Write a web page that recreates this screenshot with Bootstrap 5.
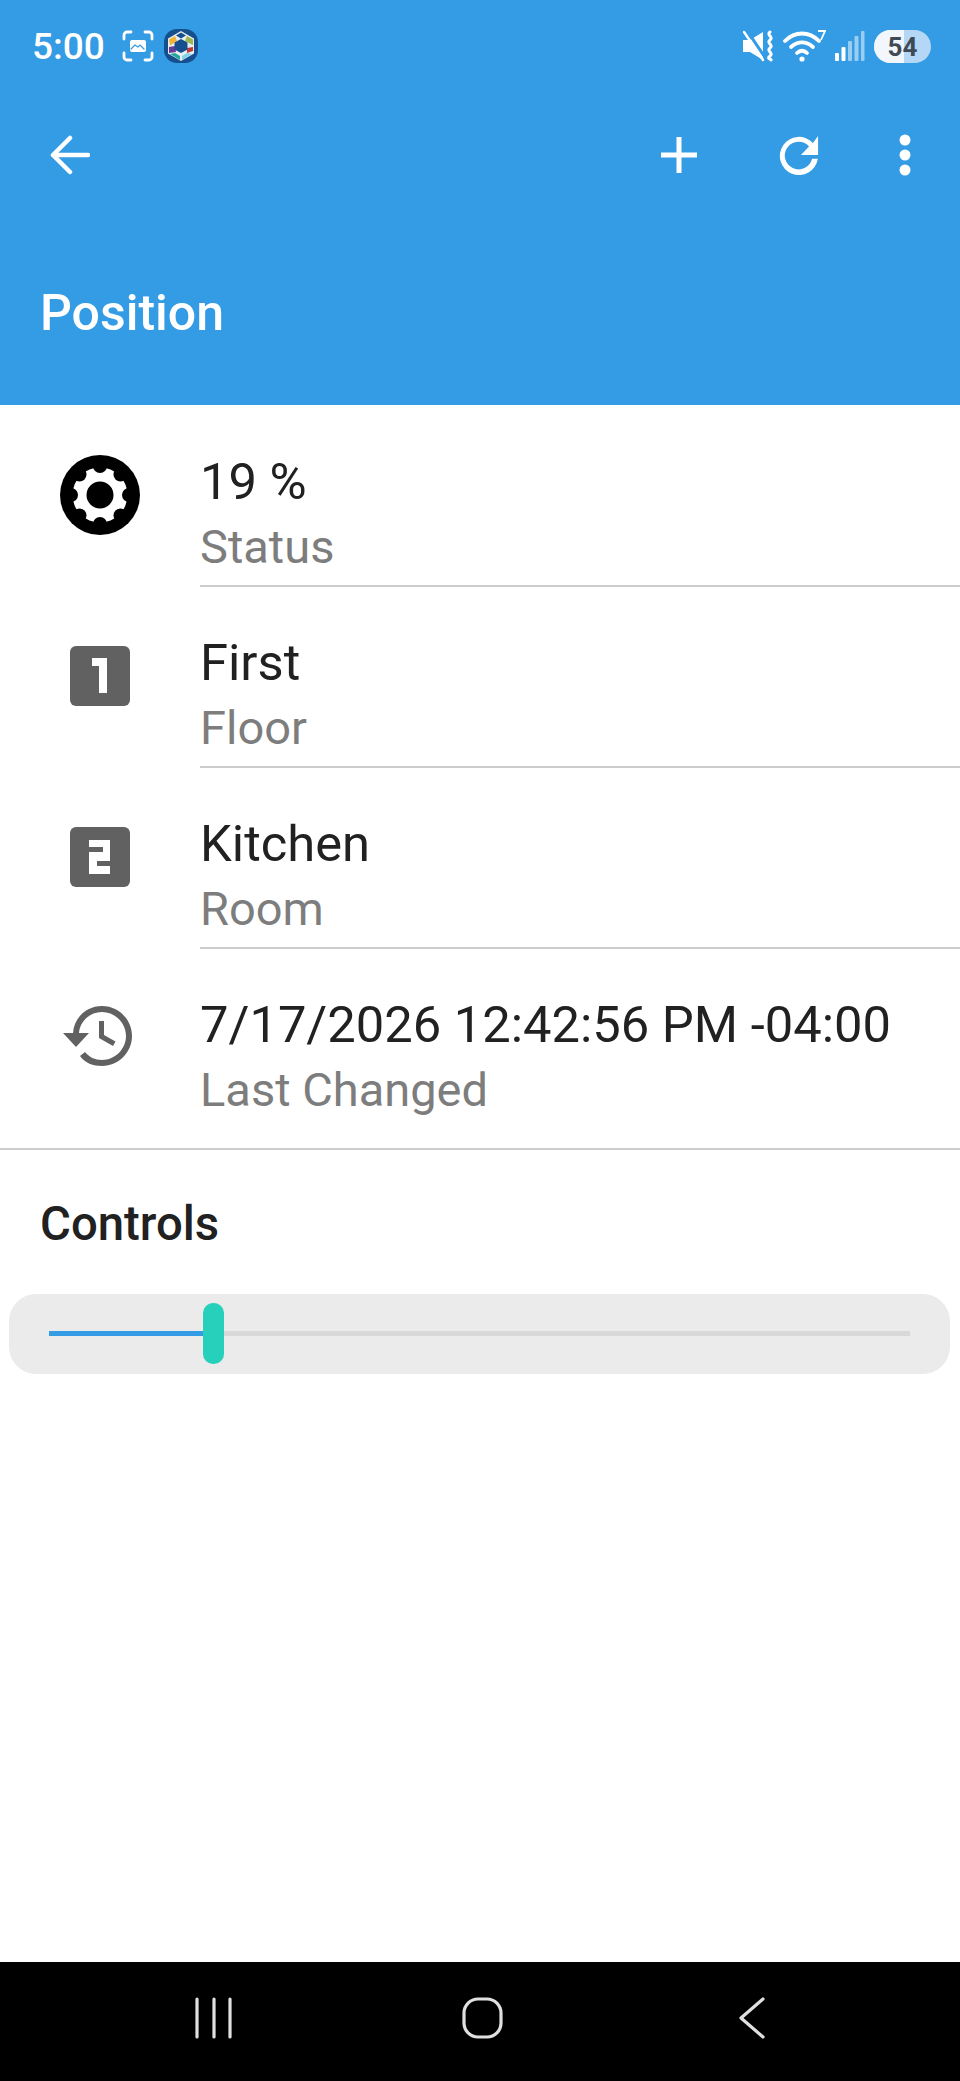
<!DOCTYPE html>
<html lang="en">
<head>
<meta charset="utf-8">
<title>Position</title>
<link href="https://cdn.jsdelivr.net/npm/bootstrap@5.3.0/dist/css/bootstrap.min.css" rel="stylesheet">
<style>
html,body{margin:0;height:100%;background:#fff}
body{font-family:Roboto,"Liberation Sans",sans-serif;color:#212121}
.phone{height:2081px;width:960px;overflow:hidden}
.app-head{background:#349be5;height:405px;color:#fff}
.status-row{height:92px;padding:0 29px 0 32px}
.clock{font-size:37px;font-weight:500;line-height:1;margin-right:17px}
.tool-row{height:126px;padding-left:50px;padding-right:48px}
.page-name{font-size:50px;font-weight:500;line-height:1;padding:70px 0 0 40px}
.item-row{height:181px}
.item-row.first{height:182px}
.item-row.last{height:199px}
.icon-cell{width:200px;flex:none}
.pad-gear{padding:50px 1px 0 0}
.pad-box{padding:59px 1px 0 0}
.pad-hist{padding:56px 4px 0 0}
.text-cell{flex:1;border-bottom:2px solid #ccc;padding-top:42.500px;height:100%}
.item-row.first .text-cell{padding-top:44px}
.item-row.last .text-cell{border-bottom:0}
.item-title{font-size:50.700px;line-height:65px;color:#212121}
.item-sub{font-size:47px;line-height:65px;color:#7d7d7d}
.rule{height:2px;background:#ccc}
.sect{font-size:47.300px;font-weight:500;line-height:50px;padding:49px 0 0 40px;height:144px}
.slide-box{margin:0 10px 0 9px;height:80px;background:#ebebeb;border-radius:27px;position:relative}
.slide-track{position:absolute;left:40px;right:40px;top:37px;height:5px;background:#d8d8d8}
.slide-fill{position:absolute;left:0;top:0;height:5px;background:#349be5}
.slide-knob{position:absolute;left:194px;top:9px;width:21px;height:61px;border-radius:10px;background:#26d0bb}
.nav-bar{height:119px;background:#000;flex:none}
.nav-bar svg{display:block}
.ic-shot{margin-right:10px}
.ic-mute{margin-right:8px}
.ic-wifi,.ic-signal{margin-right:9px}
.ic-reload{margin-left:81px}
.ic-dots{margin-left:78px}
</style>
</head>
<body>
<div class="phone d-flex flex-column">
  <header class="app-head">
    <div class="status-row d-flex align-items-center">
      <span class="clock">5:00</span>
      <svg class="ic-shot" width="32" height="32" viewBox="0 0 32 32" fill="none" stroke="#fff" stroke-width="2.800" stroke-linecap="round"><path d="M2 9V5a3 3 0 0 1 3-3h4M23 2h4a3 3 0 0 1 3 3v4M30 23v4a3 3 0 0 1-3 3h-4M9 30H5a3 3 0 0 1-3-3v-4"/><path d="M8 12a2 2 0 0 1 2-2h12a2 2 0 0 1 2 2v8a2 2 0 0 1-2 2H10a2 2 0 0 1-2-2z" fill="#fff" stroke="none"/><path d="M9 19l4-4 3 2 2-2 4 4" stroke="#349be5" stroke-width="1.200"/></svg>
      <svg width="34" height="34" viewBox="0 0 34 34"><rect width="34" height="34" rx="13" fill="#164f8e"/><path d="M17 2l13 7.500v15L17 32 4 24.500v-15z" fill="#e8eef3"/><path d="M5 10.500l6-3.500 2 5-7 4.500z" fill="#f2b233"/><path d="M5 18l6-1 1 6-7 1z" fill="#6a3a9a"/><path d="M29 10.500l-6-3.500-2 5 8 4z" fill="#9cb84c"/><path d="M29 18l-6 1v5l6-2z" fill="#c23a32"/><path d="M6 25l5-1 5 3v4z" fill="#23a79a"/><path d="M28 25l-5-1-5 3v4z" fill="#7fd4e8"/><path d="M17 3.500l5 3-5 3-5-3z" fill="#164f8e"/><path d="M17 10l6.500 3.500v7L17 24l-6.500-3.500v-7z" fill="#164f8e"/></svg>
      <div class="flex-grow-1"></div>
      <svg class="ic-mute" width="32" height="32" viewBox="0 0 32 32"><path d="M0 10h7l13-8v28l-13-8H0z" fill="#fff"/><path d="M3 -1l18 27" stroke="#349be5" stroke-width="3"/><path d="M1 2l19 28" stroke="#fff" stroke-width="2.500" stroke-linecap="round"/><path d="M27 2c-4 3 4 5 0 8s4 5 0 8 4 5 0 8 2 3 1 4" fill="none" stroke="#fff" stroke-width="3" stroke-linecap="round"/></svg>
      <svg class="ic-wifi" width="43" height="32" viewBox="0 0 43 32" fill="none" stroke="#fff" stroke-width="3.800" stroke-linecap="round"><path d="M2 11C12 1 26 1 36 11"/><path d="M8 17c7-6 15-6 22 0"/><path d="M14 23c3-3 7-3 10 0"/><circle cx="19" cy="29" r="2.600" fill="#fff" stroke="none"/><path d="M35 1h7l-4 9" stroke-width="1.800" stroke-linecap="butt"/></svg>
      <svg class="ic-signal" width="30" height="32" viewBox="0 0 30 32"><rect x="0" y="23" width="4" height="8" rx="1" fill="#fff"/><rect x="6.500" y="17" width="4" height="14" rx="1" fill="#fff"/><rect x="13" y="11" width="4" height="20" rx="1" fill="#fff" opacity=".5"/><rect x="19.500" y="6" width="4" height="25" rx="1" fill="#fff" opacity=".5"/><rect x="26" y="1" width="3.500" height="30" rx="1" fill="#fff" opacity=".5"/></svg>
      <svg width="57" height="33" viewBox="0 0 57 33"><defs><clipPath id="cl"><rect width="30" height="33"/></clipPath></defs><rect width="57" height="33" rx="16.500" fill="#b3d7f4"/><rect width="57" height="33" rx="16.500" fill="#f1f7fc" clip-path="url(#cl)"/><text x="28.500" y="26" text-anchor="middle" font-family="Roboto" font-weight="700" font-size="26" fill="#3f4a55">54</text></svg>
    </div>
    <div class="tool-row d-flex align-items-center">
      <svg width="40" height="40" viewBox="0 0 40 40" fill="none" stroke="#fff" stroke-width="4.500" stroke-linecap="round" stroke-linejoin="round"><path d="M38 20H3M20 3L3 20l17 17"/></svg>
      <div class="flex-grow-1"></div>
      <svg width="36" height="36" viewBox="0 0 36 36" fill="none" stroke="#fff" stroke-width="5"><path d="M18 0v36M0 18h36"/></svg>
      <svg class="ic-reload" width="42" height="42" viewBox="0 0 44 44"><path d="M36.600 9.400A20 20 0 1 0 41.700 26h-6A14.500 14.500 0 1 1 32.500 13L24 22h18V2z" fill="#fff"/></svg>
      <svg class="ic-dots" width="14" height="42" viewBox="0 0 14 42"><circle cx="7" cy="6" r="5.500" fill="#fff"/><circle cx="7" cy="21" r="5.500" fill="#fff"/><circle cx="7" cy="36" r="5.500" fill="#fff"/></svg>
    </div>
    <div class="page-name">Position</div>
  </header>

  <section>
    <div class="item-row first d-flex">
      <div class="icon-cell pad-gear d-flex justify-content-center">
        <svg width="80" height="80" viewBox="0 0 80 80"><circle cx="40" cy="40" r="40" fill="#000"/><circle cx="40" cy="40" r="27.500" fill="#fff"/><g fill="#000"><circle cx="40" cy="11" r="7"/><circle cx="40" cy="69" r="7"/><circle cx="11" cy="40" r="7"/><circle cx="69" cy="40" r="7"/><circle cx="19.500" cy="19.500" r="7"/><circle cx="60.500" cy="19.500" r="7"/><circle cx="19.500" cy="60.500" r="7"/><circle cx="60.500" cy="60.500" r="7"/><circle cx="40" cy="40" r="13.500"/></g></svg>
      </div>
      <div class="text-cell"><div class="item-title">19 %</div><div class="item-sub">Status</div></div>
    </div>
    <div class="item-row d-flex">
      <div class="icon-cell pad-box d-flex justify-content-center">
        <svg width="60" height="60" viewBox="0 0 60 60"><rect width="60" height="60" rx="6" fill="#616161"/><path d="M22 12h15v35h-8V20h-7z" fill="#fff"/></svg>
      </div>
      <div class="text-cell"><div class="item-title">First</div><div class="item-sub">Floor</div></div>
    </div>
    <div class="item-row d-flex">
      <div class="icon-cell pad-box d-flex justify-content-center">
        <svg width="60" height="60" viewBox="0 0 60 60"><rect width="60" height="60" rx="6" fill="#616161"/><path d="M19 13h21v21H27v5h13v8H19V25h14v-5H19z" fill="#fff"/></svg>
      </div>
      <div class="text-cell"><div class="item-title">Kitchen</div><div class="item-sub">Room</div></div>
    </div>
    <div class="item-row last d-flex">
      <div class="icon-cell pad-hist d-flex justify-content-center">
        <svg width="70" height="62" viewBox="0 0 70 62"><path fill="#616161" d="M39 1C23 1 11 13 10 28H0l13 14 13-14H16c1-12 11-21 23-21 13 0 24 11 24 24S52 55 39 55c-7 0-13-3-17-8l-5 4c5 7 13 10 22 10 17 0 30-14 30-30S56 1 39 1z"/><path fill="#616161" d="M36 16v17l14 8 2.500-4.500L41 30V16z"/></svg>
      </div>
      <div class="text-cell"><div class="item-title">7/17/2026 12:42:56 PM -04:00</div><div class="item-sub">Last Changed</div></div>
    </div>
    <div class="rule"></div>
  </section>

  <div class="sect">Controls</div>
  <div class="slide-box">
    <div class="slide-track"><div class="slide-fill" style="width:19%"></div></div>
    <div class="slide-knob"></div>
  </div>
  <div class="flex-grow-1"></div>

  <nav class="nav-bar" aria-label="System navigation">
    <svg width="960" height="119" viewBox="0 0 960 119" fill="none" stroke="#e0e0e0" stroke-width="3.200" stroke-linecap="round" stroke-linejoin="round">
      <path d="M197 37v38M214 37v38M230 37v38"/>
      <rect x="464" y="37" width="37" height="38" rx="14"/>
      <path d="M763 37l-22 19 22 19"/>
    </svg>
  </nav>
</div>
<script src="https://cdn.jsdelivr.net/npm/bootstrap@5.3.0/dist/js/bootstrap.bundle.min.js"></script>
</body>
</html>
